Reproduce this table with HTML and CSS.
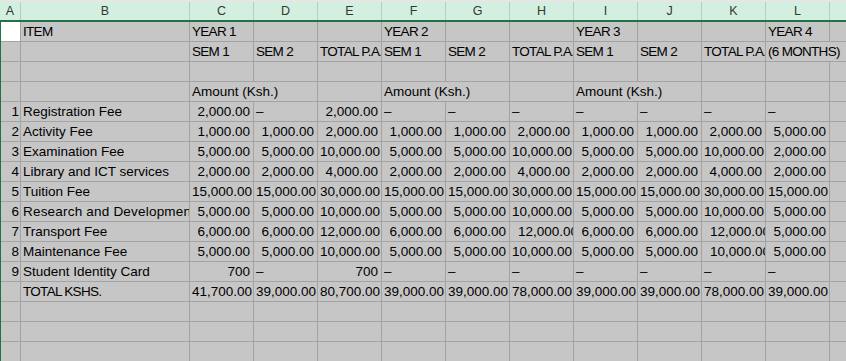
FILE: index.html
```html
<!DOCTYPE html>
<html>
<head>
<meta charset="utf-8">
<link rel="stylesheet" href="styles.css">
</head>
<body>
<div class="app">
  <div class="topstrip"></div>
  <div class="colheads">
    <div class="ch">A</div><div class="ch">B</div><div class="ch">C</div><div class="ch">D</div><div class="ch">E</div><div class="ch">F</div><div class="ch">G</div><div class="ch">H</div><div class="ch">I</div><div class="ch">J</div><div class="ch">K</div><div class="ch">L</div><div class="ch"></div>
  </div>
  <div class="sheet">
    <!-- row 1 -->
    <div class="c w"></div><div class="c hd">ITEM</div><div class="c hd">YEAR 1</div><div class="c"></div><div class="c"></div><div class="c hd">YEAR 2</div><div class="c"></div><div class="c"></div><div class="c hd">YEAR 3</div><div class="c"></div><div class="c"></div><div class="c hd">YEAR 4</div><div class="c"></div>
    <!-- row 2 -->
    <div class="c"></div><div class="c"></div><div class="c hd">SEM 1</div><div class="c hd">SEM 2</div><div class="c hd">TOTAL P.A.</div><div class="c hd">SEM 1</div><div class="c hd">SEM 2</div><div class="c hd">TOTAL P.A.</div><div class="c hd">SEM 1</div><div class="c hd">SEM 2</div><div class="c hd">TOTAL P.A.</div><div class="c hd span2">(6 MONTHS)</div>
    <!-- row 3 -->
    <div class="c"></div><div class="c"></div><div class="c"></div><div class="c"></div><div class="c"></div><div class="c"></div><div class="c"></div><div class="c"></div><div class="c"></div><div class="c"></div><div class="c"></div><div class="c"></div><div class="c"></div>
    <!-- row 4 -->
    <div class="c"></div><div class="c"></div><div class="c span2">Amount (Ksh.)</div><div class="c"></div><div class="c span2">Amount (Ksh.)</div><div class="c"></div><div class="c span2">Amount (Ksh.)</div><div class="c"></div><div class="c"></div><div class="c"></div>
    <!-- row 5 -->
    <div class="c idx">1</div><div class="c">Registration Fee</div><div class="c n">2,000.00</div><div class="c d">–</div><div class="c n">2,000.00</div><div class="c d">–</div><div class="c d">–</div><div class="c d">–</div><div class="c d">–</div><div class="c d">–</div><div class="c d">–</div><div class="c d">–</div><div class="c"></div>
    <!-- row 6 -->
    <div class="c idx">2</div><div class="c">Activity Fee</div><div class="c n">1,000.00</div><div class="c n">1,000.00</div><div class="c n">2,000.00</div><div class="c n">1,000.00</div><div class="c n">1,000.00</div><div class="c n">2,000.00</div><div class="c n">1,000.00</div><div class="c n">1,000.00</div><div class="c n">2,000.00</div><div class="c n">5,000.00</div><div class="c"></div>
    <!-- row 7 -->
    <div class="c idx">3</div><div class="c">Examination Fee</div><div class="c n">5,000.00</div><div class="c n">5,000.00</div><div class="c n">10,000.00</div><div class="c n">5,000.00</div><div class="c n">5,000.00</div><div class="c n">10,000.00</div><div class="c n">5,000.00</div><div class="c n">5,000.00</div><div class="c n">10,000.00</div><div class="c n">2,000.00</div><div class="c"></div>
    <!-- row 8 -->
    <div class="c idx">4</div><div class="c">Library and ICT services</div><div class="c n">2,000.00</div><div class="c n">2,000.00</div><div class="c n">4,000.00</div><div class="c n">2,000.00</div><div class="c n">2,000.00</div><div class="c n">4,000.00</div><div class="c n">2,000.00</div><div class="c n">2,000.00</div><div class="c n">4,000.00</div><div class="c n">2,000.00</div><div class="c"></div>
    <!-- row 9 -->
    <div class="c idx">5</div><div class="c">Tuition Fee</div><div class="c n">15,000.00</div><div class="c n">15,000.00</div><div class="c n">30,000.00</div><div class="c n">15,000.00</div><div class="c n">15,000.00</div><div class="c n">30,000.00</div><div class="c n">15,000.00</div><div class="c n">15,000.00</div><div class="c n">30,000.00</div><div class="c n">15,000.00</div><div class="c"></div>
    <!-- row 10 -->
    <div class="c idx">6</div><div class="c wide">Research and Development</div><div class="c n">5,000.00</div><div class="c n">5,000.00</div><div class="c n">10,000.00</div><div class="c n">5,000.00</div><div class="c n">5,000.00</div><div class="c n">10,000.00</div><div class="c n">5,000.00</div><div class="c n">5,000.00</div><div class="c n">10,000.00</div><div class="c n">5,000.00</div><div class="c"></div>
    <!-- row 11 -->
    <div class="c idx">7</div><div class="c">Transport Fee</div><div class="c n">6,000.00</div><div class="c n">6,000.00</div><div class="c n">12,000.00</div><div class="c n">6,000.00</div><div class="c n">6,000.00</div><div class="c clip">12,000.00</div><div class="c n">6,000.00</div><div class="c n">6,000.00</div><div class="c clip">12,000.00</div><div class="c n">5,000.00</div><div class="c"></div>
    <!-- row 12 -->
    <div class="c idx">8</div><div class="c">Maintenance Fee</div><div class="c n">5,000.00</div><div class="c n">5,000.00</div><div class="c n">10,000.00</div><div class="c n">5,000.00</div><div class="c n">5,000.00</div><div class="c n">10,000.00</div><div class="c n">5,000.00</div><div class="c n">5,000.00</div><div class="c clip">10,000.00</div><div class="c n">5,000.00</div><div class="c"></div>
    <!-- row 13 -->
    <div class="c idx">9</div><div class="c">Student Identity Card</div><div class="c n">700</div><div class="c d">–</div><div class="c n">700</div><div class="c d">–</div><div class="c d">–</div><div class="c d">–</div><div class="c d">–</div><div class="c d">–</div><div class="c d">–</div><div class="c d">–</div><div class="c"></div>
    <!-- row 14 -->
    <div class="c"></div><div class="c hd">TOTAL KSHS.</div><div class="c n">41,700.00</div><div class="c n">39,000.00</div><div class="c n">80,700.00</div><div class="c n">39,000.00</div><div class="c n">39,000.00</div><div class="c n">78,000.00</div><div class="c n">39,000.00</div><div class="c n">39,000.00</div><div class="c n">78,000.00</div><div class="c n">39,000.00</div><div class="c"></div>
    <!-- row 15 -->
    <div class="c"></div><div class="c"></div><div class="c"></div><div class="c"></div><div class="c"></div><div class="c"></div><div class="c"></div><div class="c"></div><div class="c"></div><div class="c"></div><div class="c"></div><div class="c"></div><div class="c"></div>
    <!-- row 16 -->
    <div class="c"></div><div class="c"></div><div class="c"></div><div class="c"></div><div class="c"></div><div class="c"></div><div class="c"></div><div class="c"></div><div class="c"></div><div class="c"></div><div class="c"></div><div class="c"></div><div class="c"></div>
    <!-- row 17 -->
    <div class="c"></div><div class="c"></div><div class="c"></div><div class="c"></div><div class="c"></div><div class="c"></div><div class="c"></div><div class="c"></div><div class="c"></div><div class="c"></div><div class="c"></div><div class="c"></div><div class="c"></div>
  </div>
</div>
</body>
</html>
```
FILE: styles.css
```css
html, body {
  margin: 0;
  padding: 0;
  background: #c6c6c6;
  overflow: hidden;
}
.app {
  width: 846px;
  height: 361px;
  overflow: hidden;
  font-family: "Liberation Sans", Arial, sans-serif;
  color: #000;
}
.topstrip {
  height: 2px;
  background: #e6e6e6;
}
.colheads {
  display: grid;
  grid-template-columns: 20px 168px repeat(10, 63px) 1fr;
  column-gap: 1px;
  background: #b4cdbf;
  height: 18px;
  border-bottom: 2px solid #217346;
}
.ch {
  background: #d3efdf;
  color: #2e3b33;
  font-size: 12.5px;
  line-height: 18px;
  text-align: center;
}
.sheet {
  display: grid;
  grid-template-columns: 19px 168px repeat(10, 63px) 1fr;
  grid-auto-rows: 19px;
  gap: 1px;
  background: #a3a3a3;
  border-left: 1px solid #217346;
}
.c {
  background: #c6c6c6;
  font-size: 13.5px;
  line-height: 19px;
  padding: 0 2px;
  white-space: nowrap;
  overflow: hidden;
}
.w {
  background: #ffffff;
}
.hd {
  font-size: 13.5px;
  letter-spacing: -0.7px;
}
.wide {
  letter-spacing: 0.2px;
}
.span2 {
  grid-column: span 2;
}
.n {
  text-align: right;
  padding-right: 3px;
}
.idx {
  text-align: right;
  padding-right: 1px;
}
.d {
  padding-left: 2px;
}
.clip {
  padding-left: 8px;
  padding-right: 0;
  text-overflow: clip;
}
```
